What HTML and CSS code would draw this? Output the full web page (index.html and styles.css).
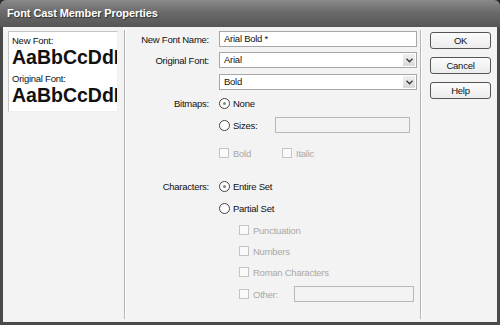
FILE: index.html
```html
<!DOCTYPE html>
<html lang="en">
<head>
    <meta charset="UTF-8">
    <title>Font Cast Member Properties</title>
    <link rel="stylesheet" href="styles.css">
</head>
<body>
    <div class="window">
        <div class="titlebar">Font Cast Member Properties</div>
        <div class="client">
            <div class="preview-col">
                <div class="preview">
                    <div class="preview-label">New Font:</div>
                    <div class="preview-sample">AaBbCcDdEeFf</div>
                    <div class="preview-label second">Original Font:</div>
                    <div class="preview-sample">AaBbCcDdEeFf</div>
                </div>
            </div>
            <div class="sep first"></div>
            <div class="form">
                <div class="row r-name">
                    <span class="label">New Font Name:</span>
                    <div class="field wide">Arial Bold *</div>
                </div>
                <div class="row r-orig">
                    <span class="label">Original Font:</span>
                    <div class="field wide select">Arial<span class="drop"><svg width="7" height="5" viewBox="0 0 7 5"><path d="M0.5 0.8 L3.5 3.8 L6.5 0.8" fill="none" stroke="#333" stroke-width="1.3"/></svg></span></div>
                </div>
                <div class="row r-style">
                    <span class="label"></span>
                    <div class="field wide select">Bold<span class="drop"><svg width="7" height="5" viewBox="0 0 7 5"><path d="M0.5 0.8 L3.5 3.8 L6.5 0.8" fill="none" stroke="#333" stroke-width="1.3"/></svg></span></div>
                </div>
                <div class="row r-none">
                    <span class="label">Bitmaps:</span>
                    <span class="radio on"></span><span class="opt">None</span>
                </div>
                <div class="row r-sizes">
                    <span class="label"></span>
                    <span class="radio"></span><span class="opt">Sizes:</span>
                    <div class="field disabled sizes-field"></div>
                </div>
                <div class="row r-bi">
                    <span class="label"></span>
                    <span class="check"></span><span class="opt off">Bold</span>
                    <span class="check italic-box"></span><span class="opt off">Italic</span>
                </div>
                <div class="row r-chars">
                    <span class="label">Characters:</span>
                    <span class="radio on"></span><span class="opt">Entire Set</span>
                </div>
                <div class="row r-partial">
                    <span class="label"></span>
                    <span class="radio"></span><span class="opt">Partial Set</span>
                </div>
                <div class="row r-punct sub">
                    <span class="check"></span><span class="opt off">Punctuation</span>
                </div>
                <div class="row r-num sub">
                    <span class="check"></span><span class="opt off">Numbers</span>
                </div>
                <div class="row r-roman sub">
                    <span class="check"></span><span class="opt off">Roman Characters</span>
                </div>
                <div class="row r-other sub">
                    <span class="check"></span><span class="opt off other-label">Other:</span>
                    <div class="field disabled other-field"></div>
                </div>
            </div>
            <div class="sep"></div>
            <div class="buttons">
                <div class="btn">OK</div>
                <div class="btn">Cancel</div>
                <div class="btn">Help</div>
            </div>
        </div>
    </div>
</body>
</html>
```

FILE: styles.css
```css
body {
    margin: 0;
    padding: 0;
    background: #2a2a2a;
    font-family: 'Liberation Sans', Arial, sans-serif;
}

.window {
    width: 500px;
    height: 325px;
    box-sizing: border-box;
    background: #4a4a4a;
    border-radius: 6px 6px 0 0;
    padding: 0 3px 3px 3px;
    display: flex;
    flex-direction: column;
    overflow: hidden;
}

.titlebar {
    height: 27px;
    flex: none;
    margin: 0 -3px;
    padding-left: 7px;
    background: linear-gradient(#8a8a8a, #6a6a6a 45%, #555 100%);
    color: #fff;
    font-weight: bold;
    font-size: 11px;
    line-height: 27px;
    letter-spacing: -0.1px;
    text-shadow: 1px 1px 1px rgba(0, 0, 0, 0.5);
}

.client {
    flex: 1;
    background: #f3f3f3;
    display: flex;
    padding: 4px 0 3px 0;
    font-size: 9.5px;
    letter-spacing: -0.25px;
    color: #111;
}

.preview-col {
    width: 116px;
    box-sizing: border-box;
    padding-left: 5px;
    flex: none;
}

.preview {
    width: 110px;
    height: 81px;
    box-sizing: border-box;
    background: #fff;
    border: 1px solid #c4c4c4;
    border-right-color: #eee;
    border-bottom-color: #eee;
    padding: 3px 0 0 3px;
    overflow: hidden;
}

.preview-label {
    height: 11px;
    line-height: 11px;
    font-size: 9.5px;
}

.preview-label.second {
    margin-top: 6px;
}

.preview-sample {
    font-weight: bold;
    font-size: 19.5px;
    letter-spacing: 0;
    line-height: 20px;
    white-space: nowrap;
    margin-top: 1px;
}

.sep {
    width: 1px;
    flex: none;
    background: #b4b4b4;
    margin: -1px 0 0 1px;
    border-right: 1px solid #fff;
}

.sep.first {
    margin-left: 5px;
}

.form {
    width: 293px;
    flex: none;
}

.row {
    display: flex;
    align-items: center;
    height: 14px;
}

.label {
    width: 83px;
    flex: none;
    text-align: right;
    margin-right: 10px;
}

.field {
    height: 16px;
    box-sizing: border-box;
    background: #fff;
    border: 1px solid #a7a7a7;
    line-height: 14px;
    padding-left: 4px;
    position: relative;
}

.wide {
    width: 198px;
}

.select .drop {
    position: absolute;
    right: 1px;
    top: 1px;
    width: 12px;
    height: 12px;
    background: linear-gradient(#f0f0f0, #d8d8d8);
    display: flex;
    align-items: center;
    justify-content: center;
}

.disabled {
    background: #f3f3f3;
    border-color: #b8b8b8;
}

.r-name { height: 16px; }
.r-orig { height: 16px; margin-top: 5px; }
.r-style { height: 16px; margin-top: 6px; }
.r-none { margin-top: 6px; }
.r-sizes { height: 16px; margin-top: 7px; }
.r-bi { margin-top: 13px; }
.r-chars { margin-top: 19px; }
.r-partial { margin-top: 8px; }
.r-punct { margin-top: 8px; }
.r-num { margin-top: 7px; }
.r-roman { margin-top: 7px; }
.r-other { height: 16px; margin-top: 7px; }

.radio {
    width: 11px;
    height: 11px;
    box-sizing: border-box;
    border: 1px solid #444;
    border-radius: 50%;
    background: #fff;
    flex: none;
    display: flex;
    align-items: center;
    justify-content: center;
}

.radio.on::after {
    content: "";
    width: 3px;
    height: 3px;
    border-radius: 50%;
    background: #888;
}

.opt {
    margin-left: 3px;
    white-space: nowrap;
}

.opt.off {
    color: #a8a8a8;
    margin-left: 4px;
}

.check {
    width: 10px;
    height: 10px;
    box-sizing: border-box;
    border: 1px solid #c4c4c4;
    background: #fafafa;
    flex: none;
}

.r-bi .check:first-of-type {
    margin-left: 20px;
}

.r-bi .italic-box {
    margin-left: 31px;
}

.sub {
    padding-left: 113px;
}

.sizes-field {
    width: 135px;
    margin-left: 18px;
}

.other-label {
    width: 41px;
}

.other-field {
    width: 120px;
    height: 16px;
}

.buttons {
    flex: none;
    padding-left: 8px;
    display: flex;
    flex-direction: column;
    gap: 8px;
    padding-top: 1px;
}

.btn {
    width: 61px;
    height: 17px;
    box-sizing: border-box;
    border: 1px solid #555;
    border-radius: 3px;
    background: linear-gradient(#fbfbfb, #ececec);
    text-align: center;
    line-height: 15px;
    font-size: 9.5px;
}
```
